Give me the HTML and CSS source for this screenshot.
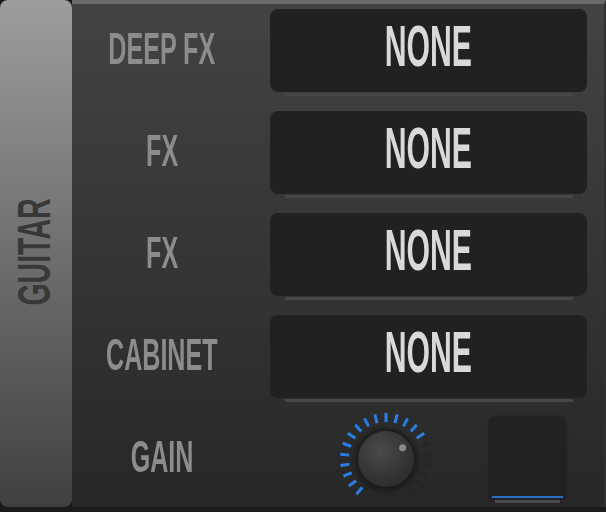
FILE: index.html
```html
<!DOCTYPE html>
<html>
<head>
    <meta charset="utf-8">
    <link rel="stylesheet" href="styles.css">
</head>
<body>
    <main class="rack">
        <div class="tab">
            <span class="tab-label">GUITAR</span>
        </div>
        <div class="panel">
            <div class="row">
                <div class="label"><span>DEEP FX</span></div>
                <div class="slot">
                    <div class="value"><span>NONE</span></div>
                    <div class="slot-line"></div>
                </div>
            </div>
            <div class="row">
                <div class="label"><span>FX</span></div>
                <div class="slot">
                    <div class="value"><span>NONE</span></div>
                    <div class="slot-line"></div>
                </div>
            </div>
            <div class="row">
                <div class="label"><span>FX</span></div>
                <div class="slot">
                    <div class="value"><span>NONE</span></div>
                    <div class="slot-line"></div>
                </div>
            </div>
            <div class="row">
                <div class="label"><span>CABINET</span></div>
                <div class="slot">
                    <div class="value"><span>NONE</span></div>
                    <div class="slot-line"></div>
                </div>
            </div>
            <div class="row">
                <div class="label"><span>GAIN</span></div>
                <div class="controls">
                    <svg class="knob" width="100" height="100" viewBox="0 0 100 100">
                        <defs>
                            <radialGradient id="knobFace" cx="40%" cy="35%" r="70%">
                                <stop offset="0%" stop-color="#4a4a4a"/>
                                <stop offset="100%" stop-color="#2b2b2b"/>
                            </radialGradient>
                            <filter id="knobShadow" x="-20%" y="-20%" width="140%" height="140%">
                                <feGaussianBlur stdDeviation="1.5"/>
                            </filter>
                        </defs>
                        <g class="ticks-on" stroke="#2a7fe4" stroke-width="3">
                            <line x1="50" y1="4" x2="50" y2="13" transform="rotate(-140 50 50)"/>
                            <line x1="50" y1="4" x2="50" y2="13" transform="rotate(-126 50 50)"/>
                            <line x1="50" y1="4" x2="50" y2="13" transform="rotate(-112 50 50)"/>
                            <line x1="50" y1="4" x2="50" y2="13" transform="rotate(-98 50 50)"/>
                            <line x1="50" y1="4" x2="50" y2="13" transform="rotate(-84 50 50)"/>
                            <line x1="50" y1="4" x2="50" y2="13" transform="rotate(-70 50 50)"/>
                            <line x1="50" y1="4" x2="50" y2="13" transform="rotate(-56 50 50)"/>
                            <line x1="50" y1="4" x2="50" y2="13" transform="rotate(-42 50 50)"/>
                            <line x1="50" y1="4" x2="50" y2="13" transform="rotate(-28 50 50)"/>
                            <line x1="50" y1="4" x2="50" y2="13" transform="rotate(-14 50 50)"/>
                            <line x1="50" y1="4" x2="50" y2="13"/>
                            <line x1="50" y1="4" x2="50" y2="13" transform="rotate(14 50 50)"/>
                            <line x1="50" y1="4" x2="50" y2="13" transform="rotate(28 50 50)"/>
                            <line x1="50" y1="4" x2="50" y2="13" transform="rotate(42 50 50)"/>
                            <line x1="50" y1="4" x2="50" y2="13" transform="rotate(56 50 50)"/>
                        </g>
                        <g class="ticks-off" stroke="#252525" stroke-width="3">
                            <line x1="50" y1="4" x2="50" y2="13" transform="rotate(70 50 50)"/>
                            <line x1="50" y1="4" x2="50" y2="13" transform="rotate(84 50 50)"/>
                            <line x1="50" y1="4" x2="50" y2="13" transform="rotate(98 50 50)"/>
                            <line x1="50" y1="4" x2="50" y2="13" transform="rotate(112 50 50)"/>
                            <line x1="50" y1="4" x2="50" y2="13" transform="rotate(126 50 50)"/>
                            <line x1="50" y1="4" x2="50" y2="13" transform="rotate(140 50 50)"/>
                        </g>
                        <circle cx="50" cy="51" r="32" fill="#1e1e1e" filter="url(#knobShadow)"/>
                        <circle cx="50" cy="50" r="28" fill="url(#knobFace)"/>
                        <circle cx="66.6" cy="38.8" r="3.5" fill="#8a8a8a"/>
                    </svg>
                    <div class="pad">
                        <div class="pad-face">
                            <div class="pad-meter"></div>
                        </div>
                        <div class="pad-line"></div>
                    </div>
                </div>
            </div>
        </div>
    </main>
</body>
</html>
```

FILE: styles.css
```css
* {
    box-sizing: border-box;
}
html, body {
    margin: 0;
    background: #1b1b1b;
}
body {
    font-family: "Liberation Sans Narrow", "Liberation Sans", sans-serif;
    font-weight: bold;
}
.rack {
    display: flex;
    width: 606px;
    height: 507px;
}
.tab {
    width: 72px;
    flex-shrink: 0;
    border-radius: 8px;
    background: linear-gradient(#9d9d9d, #404040);
    display: flex;
    align-items: center;
    justify-content: center;
    padding: 0 3px 3px 0;
}
.tab-label {
    flex-shrink: 0;
    white-space: nowrap;
    display: inline-block;
    font-size: 46px;
    line-height: 1;
    color: #383838;
    transform: rotate(-90deg) scaleX(.62);
}
.panel {
    flex: 1;
    border-top: 4px solid #6a6a6a;
    border-right: 2px solid #303030;
    background: linear-gradient(#434343, #272727);
    padding: 5px 17px 0 0;
}
.row {
    display: grid;
    grid-template-columns: 180px 1fr;
    column-gap: 18px;
    height: 102px;
}
.label {
    height: 83px;
    display: flex;
    align-items: center;
    justify-content: center;
    padding-bottom: 4px;
    font-size: 44px;
    color: #8c8c8c;
}
.label span {
    display: inline-block;
    white-space: nowrap;
    transform: scaleX(.57);
}
.slot {
    display: flex;
    flex-direction: column;
}
.value {
    height: 83px;
    background: #212121;
    border-radius: 8px;
    display: flex;
    align-items: center;
    justify-content: center;
    padding: 0 0 9px 0;
    font-size: 57px;
    color: #d9d9d9;
}
.value span {
    display: inline-block;
    transform: scaleX(.53);
}
.slot-line {
    height: 3px;
    margin: 1px 14px 0 15px;
    background: #474747;
}
.controls {
    display: flex;
    align-items: flex-start;
}
.knob {
    margin: -8px 0 0 66px;
}
.pad {
    margin-left: 53px;
    width: 77px;
    display: flex;
    flex-direction: column;
}
.pad-face {
    height: 83px;
    background: #222;
    border-radius: 6px;
    box-shadow: 0 0 3px rgba(0, 0, 0, .35);
    display: flex;
    flex-direction: column;
    justify-content: flex-end;
    padding: 0 3px 2px;
}
.pad-meter {
    height: 2px;
    background: #2d6cc6;
}
.pad-line {
    height: 3px;
    margin: 0 6px;
    background: #4a4a4a;
}
```
